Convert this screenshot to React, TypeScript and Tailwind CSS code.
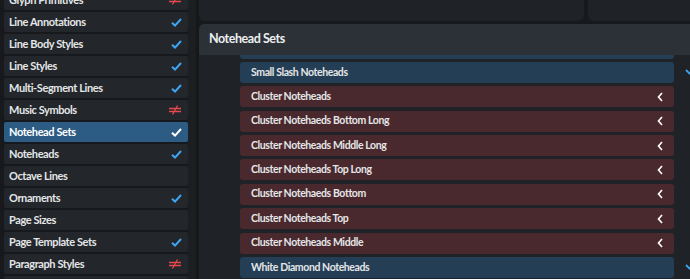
import React from "react";

type Mark = "check" | "neq" | null;

const sidebar: { label: string; mark: Mark; selected?: boolean }[] = [
  { label: "Glyph Primitives", mark: "neq" },
  { label: "Line Annotations", mark: "check" },
  { label: "Line Body Styles", mark: "check" },
  { label: "Line Styles", mark: "check" },
  { label: "Multi-Segment Lines", mark: "check" },
  { label: "Music Symbols", mark: "neq" },
  { label: "Notehead Sets", mark: "check", selected: true },
  { label: "Noteheads", mark: "check" },
  { label: "Octave Lines", mark: null },
  { label: "Ornaments", mark: "check" },
  { label: "Page Sizes", mark: null },
  { label: "Page Template Sets", mark: "check" },
  { label: "Paragraph Styles", mark: "neq" },
  { label: "", mark: null },
];

// first row sits under the header, only its bottom edge shows
const sets: { label: string; kind: "open" | "closed" }[] = [
  { label: "", kind: "open" },
  { label: "Small Slash Noteheads", kind: "open" },
  { label: "Cluster Noteheads", kind: "closed" },
  { label: "Cluster Notehaeds Bottom Long", kind: "closed" },
  { label: "Cluster Noteheads Middle Long", kind: "closed" },
  { label: "Cluster Noteheads Top Long", kind: "closed" },
  { label: "Cluster Notehaeds Bottom", kind: "closed" },
  { label: "Cluster Noteheads Top", kind: "closed" },
  { label: "Cluster Noteheads Middle", kind: "closed" },
  { label: "White Diamond Noteheads", kind: "open" },
];

function Check({ white }: { white?: boolean }) {
  return (
    <svg width="11" height="9" viewBox="0 0 11 9" className={white ? "text-white" : "text-[#3ea6f0]"}>
      <path d="M1 4.8 L4 7.6 L10 1" fill="none" stroke="currentColor" strokeWidth="2" />
    </svg>
  );
}

function NotEqual() {
  return (
    <svg width="14" height="10" viewBox="0 0 14 10" className="text-[#e5484d]">
      <path d="M1 3.5 H13 M1 6.5 H13 M9.5 0.5 L4.5 9.5" fill="none" stroke="currentColor" strokeWidth="1.3" />
    </svg>
  );
}

function ChevronLeft() {
  return (
    <svg width="6" height="10" viewBox="0 0 6 10" className="text-white">
      <path d="M5 1 L1.5 5 L5 9" fill="none" stroke="currentColor" strokeWidth="1.6" />
    </svg>
  );
}

function ChevronDown() {
  return (
    <svg width="9" height="6" viewBox="0 0 9 6" className="text-[#3ea6f0]">
      <path d="M1 1 L4.5 4.5 L8 1" fill="none" stroke="currentColor" strokeWidth="1.8" />
    </svg>
  );
}

export default function App() {
  return (
    <div
      className="flex h-[279px] w-[690px] overflow-hidden bg-[#17191c] text-[#e4e6e8]"
      style={{ fontFamily: "Lato, 'Noto Sans', sans-serif" }}
    >
      {/* sidebar */}
      <div className="flex w-[188px] shrink-0 flex-col pl-[4px]">
        <div className="-mt-[10px] flex flex-col gap-[2px]">
          {sidebar.map((item, i) => (
            <div
              key={i}
              className={`flex h-[20px] items-center justify-between rounded-[2px] pl-[5px] pr-[6px] text-[11px] font-bold tracking-[-0.4px] ${
                item.selected ? "bg-[#2c5b84] text-white" : "bg-[#23262a]"
              }`}
            >
              <span>{item.label}</span>
              {item.mark === "check" && <Check white={item.selected} />}
              {item.mark === "neq" && <NotEqual />}
            </div>
          ))}
        </div>
      </div>

      {/* divider */}
      <div className="w-[8px] shrink-0 bg-[#1c1f22]" />
      <div className="w-[3px] shrink-0 bg-[#151719]" />

      {/* main */}
      <div className="flex w-[500px] shrink-0 flex-col">
        <div className="flex h-[21px] gap-[4px]">
          <div className="w-[385px] rounded-b-[6px] bg-[#1f2226]" />
          <div className="flex-1 rounded-b-[6px] bg-[#1f2226]" />
        </div>
        <div className="mt-[3px] flex h-[31px] items-center justify-between rounded-tl-[5px] bg-[#2c3137] pl-[10px] pr-0">
          <span className="text-[12.5px] font-bold tracking-[-0.45px] text-[#eceef0]">Notehead Sets</span>
          <ChevronDown />
        </div>
        <div className="flex-1 overflow-hidden bg-[#1f2226]">
          <div className="-mt-[17.4px] flex flex-col gap-[3.375px] pl-[41px]">
            {sets.map((s, i) => (
              <div key={i} className="flex items-center">
                <div
                  className={`flex h-[21px] w-[434px] items-center justify-between rounded-[3px] pl-[11px] pr-[11px] text-[10.5px] font-bold tracking-[-0.4px] ${
                    s.kind === "open" ? "bg-[#243e55]" : "bg-[#4a292e]"
                  }`}
                >
                  <span>{s.label}</span>
                  {s.kind === "closed" && <ChevronLeft />}
                </div>
                <div className="ml-[11px]">{s.kind === "open" && <ChevronDown />}</div>
              </div>
            ))}
          </div>
        </div>
      </div>
    </div>
  );
}
